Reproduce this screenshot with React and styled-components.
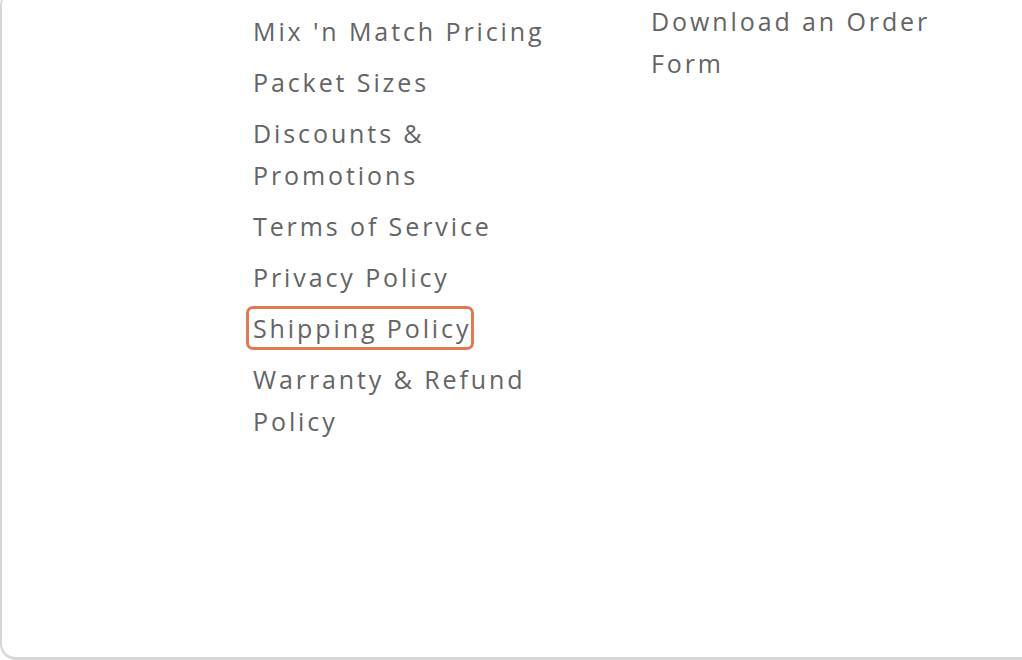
import React from 'react'
import styled, {createGlobalStyle} from 'styled-components'

const GlobalStyle = createGlobalStyle`
    html, body {
        margin: 0;
        padding: 0;
        background: #ffffff;
        overflow: hidden;
    }
`

const Frame = styled.div`
    box-sizing: border-box;
    width: 1022px;
    height: 672px;
    margin-top: -12px;
    border-left: 2px solid #d6d6d6;
    border-bottom: 3px solid #d6d6d6;
    border-radius: 18px 0 0 16px;
    background: #ffffff;
    font-family: "Open Sans", Lato, sans-serif;
    color: #646464;
`

const Columns = styled.div`
    display: flex;
    padding-left: 244px;
    padding-top: 22px;
`

const LinkList = styled.ul`
    list-style: none;
    margin: 0;
    padding: 0;
    width: ${props => props.width}px;
    margin-top: ${props => props.offset || 0}px;
    display: flex;
    flex-direction: column;
    gap: 9px;
`

const LinkItem = styled.li`
    margin: 0;
    max-width: ${props => props.max}px;
    font-size: 25px;
    line-height: 42px;
    letter-spacing: 2.9px;
`

const Link = styled.a`
    color: #646464;
    text-decoration: none;
    padding: 2px 0 2px 4px;
    border: 3px solid ${props => props.focused ? '#e07a52' : 'transparent'};
    border-radius: 7px;
    -webkit-box-decoration-break: clone;
    box-decoration-break: clone;
`

const leftLinks = [
    "Mix 'n Match Pricing",
    'Packet Sizes',
    'Discounts & Promotions',
    'Terms of Service',
    'Privacy Policy',
    'Shipping Policy',
    'Warranty & Refund Policy',
]

const rightLinks = ['Download an Order Form']

function App() {
    return (
        <>
            <GlobalStyle />
            <Frame>
                <Columns>
                    <LinkList width={398}>
                        {leftLinks.map(link => (
                            <LinkItem key={link} max={330}>
                                <Link href="#" focused={link === 'Shipping Policy' ? 1 : 0}>{link}</Link>
                            </LinkItem>
                        ))}
                    </LinkList>
                    <LinkList width={320} offset={-10}>
                        {rightLinks.map(link => (
                            <LinkItem key={link} max={310}>
                                <Link href="#">{link}</Link>
                            </LinkItem>
                        ))}
                    </LinkList>
                </Columns>
            </Frame>
        </>
    )
}

export default App
